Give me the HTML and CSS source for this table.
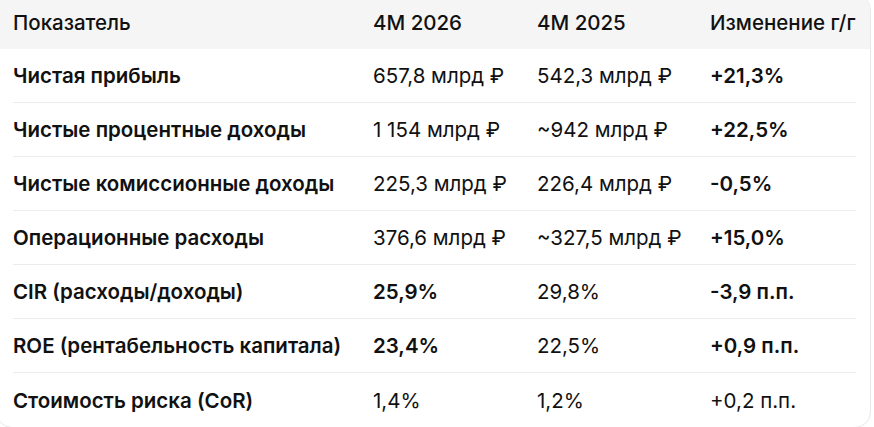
FILE: index.html
```html
<!DOCTYPE html>
<html lang="ru">
<head>
<meta charset="utf-8">
<link rel="stylesheet" href="styles.css">
</head>
<body>
<div class="card">
  <div class="row head">
    <div class="cell">Показатель</div>
    <div class="cell">4M 2026</div>
    <div class="cell">4M 2025</div>
    <div class="cell">Изменение г/г</div>
  </div>
  <div class="row">
    <div class="cell label">Чистая прибыль</div>
    <div class="cell">657,8 млрд ₽</div>
    <div class="cell">542,3 млрд ₽</div>
    <div class="cell strong">+21,3%</div>
  </div>
  <div class="row">
    <div class="cell label">Чистые процентные доходы</div>
    <div class="cell">1 154 млрд ₽</div>
    <div class="cell">~942 млрд ₽</div>
    <div class="cell strong">+22,5%</div>
  </div>
  <div class="row">
    <div class="cell label">Чистые комиссионные доходы</div>
    <div class="cell">225,3 млрд ₽</div>
    <div class="cell">226,4 млрд ₽</div>
    <div class="cell strong">-0,5%</div>
  </div>
  <div class="row">
    <div class="cell label">Операционные расходы</div>
    <div class="cell">376,6 млрд ₽</div>
    <div class="cell">~327,5 млрд ₽</div>
    <div class="cell strong">+15,0%</div>
  </div>
  <div class="row">
    <div class="cell label">CIR (расходы/доходы)</div>
    <div class="cell strong">25,9%</div>
    <div class="cell">29,8%</div>
    <div class="cell strong">-3,9 п.п.</div>
  </div>
  <div class="row">
    <div class="cell label">ROE (рентабельность капитала)</div>
    <div class="cell strong">23,4%</div>
    <div class="cell">22,5%</div>
    <div class="cell strong">+0,9 п.п.</div>
  </div>
  <div class="row last">
    <div class="cell label">Стоимость риска (CoR)</div>
    <div class="cell">1,4%</div>
    <div class="cell">1,2%</div>
    <div class="cell">+0,2 п.п.</div>
  </div>
</div>
</body>
</html>
```
FILE: styles.css
```css
html, body {
  margin: 0;
  padding: 0;
  background: #ffffff;
  overflow: hidden;
}
body {
  font-family: Inter, "Noto Sans", sans-serif;
  font-size: 20.5px;
  color: #111111;
}
.card {
  margin: -6px 3px 0 -4px;
  border: 1px solid #e8e8e8;
  border-radius: 16px;
  overflow: hidden;
  background: #fff;
}
.row {
  display: grid;
  grid-template-columns: 360px 164px 173px 1fr;
  align-items: center;
  height: 54px;
  margin: 0 14px 0 16px;
  border-bottom: 1px solid #ececec;
  box-sizing: border-box;
  white-space: nowrap;
}
.row.head {
  margin: 0;
  padding: 0 14px 0 16px;
  background: #f5f5f5;
  border-bottom: none;
  font-weight: 500;
}
.row.last {
  border-bottom: none;
}
.label {
  font-weight: 560;
}
.strong {
  font-weight: 600;
}
```
